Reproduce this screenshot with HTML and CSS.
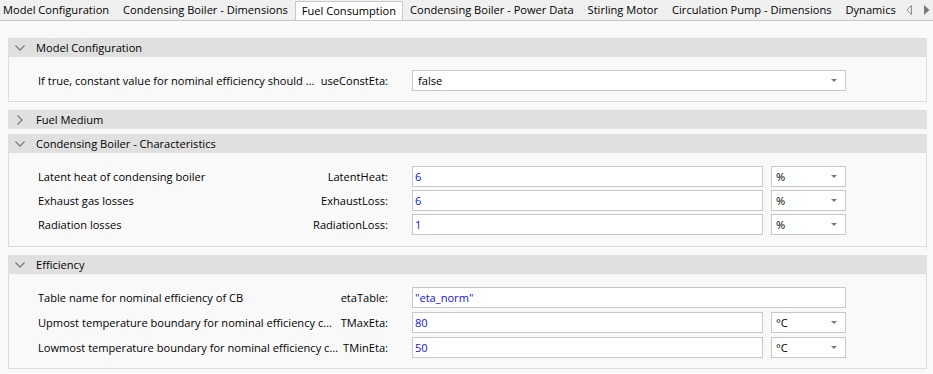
FILE: index.html
```html
<!DOCTYPE html>
<html lang="en">
<head>
    <meta charset="UTF-8">
    <title>Fuel Consumption</title>
    <link rel="stylesheet" href="styles.css">
</head>
<body>
    <div class="tabbar">
        <div class="tabs">
            <div class="tab first">Model Configuration</div>
            <div class="tab">Condensing Boiler - Dimensions</div>
            <div class="tab active">Fuel Consumption</div>
            <div class="tab">Condensing Boiler - Power Data</div>
            <div class="tab">Stirling Motor</div>
            <div class="tab">Circulation Pump - Dimensions</div>
            <div class="tab">Dynamics</div>
        </div>
        <div class="scroll">
            <svg width="6" height="10" viewBox="0 0 6 10"><path d="M5.5 0.5 L0.8 5 L5.5 9.5 Z" fill="none" stroke="#8a8a8a" stroke-width="1"/></svg>
            <svg width="6" height="10" viewBox="0 0 6 10"><path d="M0 0 L5.5 5 L0 10 Z" fill="#7a7a7a"/></svg>
        </div>
    </div>

    <div class="page">
        <div class="section open">
            <div class="header">
                <svg class="chev" width="10" height="6" viewBox="0 0 10 6"><path d="M0.5 0.5 L5 5 L9.5 0.5" fill="none" stroke="#7d7d7d" stroke-width="1.3"/></svg>
                Model Configuration
            </div>
            <div class="content">
                <div class="row">
                    <div class="label"><span class="desc">If true, constant value for nominal efficiency should be used</span><span class="name">useConstEta:</span></div>
                    <div class="field combo wide">false<span class="drop"></span></div>
                </div>
            </div>
        </div>

        <div class="section closed">
            <div class="header">
                <svg class="chev right" width="6" height="10" viewBox="0 0 6 10"><path d="M0.5 0.5 L5 5 L0.5 9.5" fill="none" stroke="#7d7d7d" stroke-width="1.3"/></svg>
                Fuel Medium
            </div>
        </div>

        <div class="section open">
            <div class="header">
                <svg class="chev" width="10" height="6" viewBox="0 0 10 6"><path d="M0.5 0.5 L5 5 L9.5 0.5" fill="none" stroke="#7d7d7d" stroke-width="1.3"/></svg>
                Condensing Boiler - Characteristics
            </div>
            <div class="content boiler">
                <div class="row">
                    <div class="label"><span class="desc">Latent heat of condensing boiler</span><span class="name">LatentHeat:</span></div>
                    <div class="field value">6</div>
                    <div class="field combo unit">%<span class="drop"></span></div>
                </div>
                <div class="row">
                    <div class="label"><span class="desc">Exhaust gas losses</span><span class="name">ExhaustLoss:</span></div>
                    <div class="field value">6</div>
                    <div class="field combo unit">%<span class="drop"></span></div>
                </div>
                <div class="row">
                    <div class="label"><span class="desc">Radiation losses</span><span class="name">RadiationLoss:</span></div>
                    <div class="field value">1</div>
                    <div class="field combo unit">%<span class="drop"></span></div>
                </div>
            </div>
        </div>

        <div class="section open">
            <div class="header">
                <svg class="chev" width="10" height="6" viewBox="0 0 10 6"><path d="M0.5 0.5 L5 5 L9.5 0.5" fill="none" stroke="#7d7d7d" stroke-width="1.3"/></svg>
                Efficiency
            </div>
            <div class="content efficiency">
                <div class="row">
                    <div class="label"><span class="desc">Table name for nominal efficiency of CB</span><span class="name">etaTable:</span></div>
                    <div class="field value wide">"eta_norm"</div>
                </div>
                <div class="row">
                    <div class="label"><span class="desc">Upmost temperature boundary for nominal efficiency characteristic</span><span class="name">TMaxEta:</span></div>
                    <div class="field value">80</div>
                    <div class="field combo unit">°C<span class="drop"></span></div>
                </div>
                <div class="row">
                    <div class="label"><span class="desc">Lowmost temperature boundary for nominal efficiency characteristic</span><span class="name">TMinEta:</span></div>
                    <div class="field value">50</div>
                    <div class="field combo unit">°C<span class="drop"></span></div>
                </div>
            </div>
        </div>
    </div>
</body>
</html>
```

FILE: styles.css
```css
body {
    margin: 0;
    background: #f9f9f9;
    font-family: "Open Sans", "Noto Sans", sans-serif;
    font-size: 11.1px;
    color: #000;
    overflow: hidden;
}
.tabbar {
    display: flex;
    height: 21px;
    background: #f0f0f0;
    border-bottom: 1px solid #c8c8c8;
    box-sizing: border-box;
}
.tabs {
    display: flex;
    flex: 1;
    align-items: flex-end;
    white-space: nowrap;
    overflow: hidden;
}
.tab {
    height: 19px;
    line-height: 18px;
    padding: 0 7px;
    box-sizing: border-box;
}
.tab.first {
    padding-left: 3px;
}
.tab.active {
    height: 20px;
    margin-bottom: -1px;
    padding: 0 6px;
    background: #fff;
    border: 1px solid #c8c8c8;
    border-bottom: none;
}
.scroll {
    display: flex;
    align-items: center;
    gap: 12px;
    padding: 0 3px 0 3px;
}
.page {
    padding: 17px 6px 0 8px;
}
.section.open {
    margin-bottom: 8px;
}
.section.closed {
    margin-bottom: 5px;
}
.header {
    display: flex;
    align-items: center;
    height: 19px;
    background: #e0e0e0;
    padding-left: 7px;
}
.chev {
    margin-right: 11px;
}
.chev.right {
    margin-left: 2px;
    margin-right: 13px;
}
.content {
    background: #f9f9f9;
    border: 1px solid #dcdcdc;
    border-top: none;
    padding: 13px 0 7px 29px;
}
.content.boiler {
    padding-bottom: 8px;
}
.content.efficiency {
    padding-bottom: 6px;
}
.row {
    display: flex;
    align-items: center;
    height: 21px;
    margin-bottom: 3px;
}
.efficiency .row {
    margin-bottom: 4px;
}
.label {
    display: flex;
    width: 350px;
    margin-right: 24px;
    white-space: nowrap;
}
.desc {
    flex: 1;
    min-width: 0;
    overflow: hidden;
    text-overflow: ellipsis;
    margin-right: 5px;
}
.name {
    flex-shrink: 0;
}
.field {
    position: relative;
    height: 21px;
    line-height: 19px;
    box-sizing: border-box;
    background: #fff;
    border: 1px solid #c8c8c8;
    white-space: nowrap;
}
.value {
    width: 351px;
    padding-left: 2px;
    color: #1010ee;
}
.combo {
    padding-left: 5px;
}
.wide {
    width: 434px;
}
.unit {
    width: 75px;
    margin-left: 8px;
    padding-left: 4px;
}
.drop {
    position: absolute;
    right: 8px;
    top: 8px;
    border-left: 3px solid transparent;
    border-right: 3px solid transparent;
    border-top: 3px solid #7a7a7a;
}
```
